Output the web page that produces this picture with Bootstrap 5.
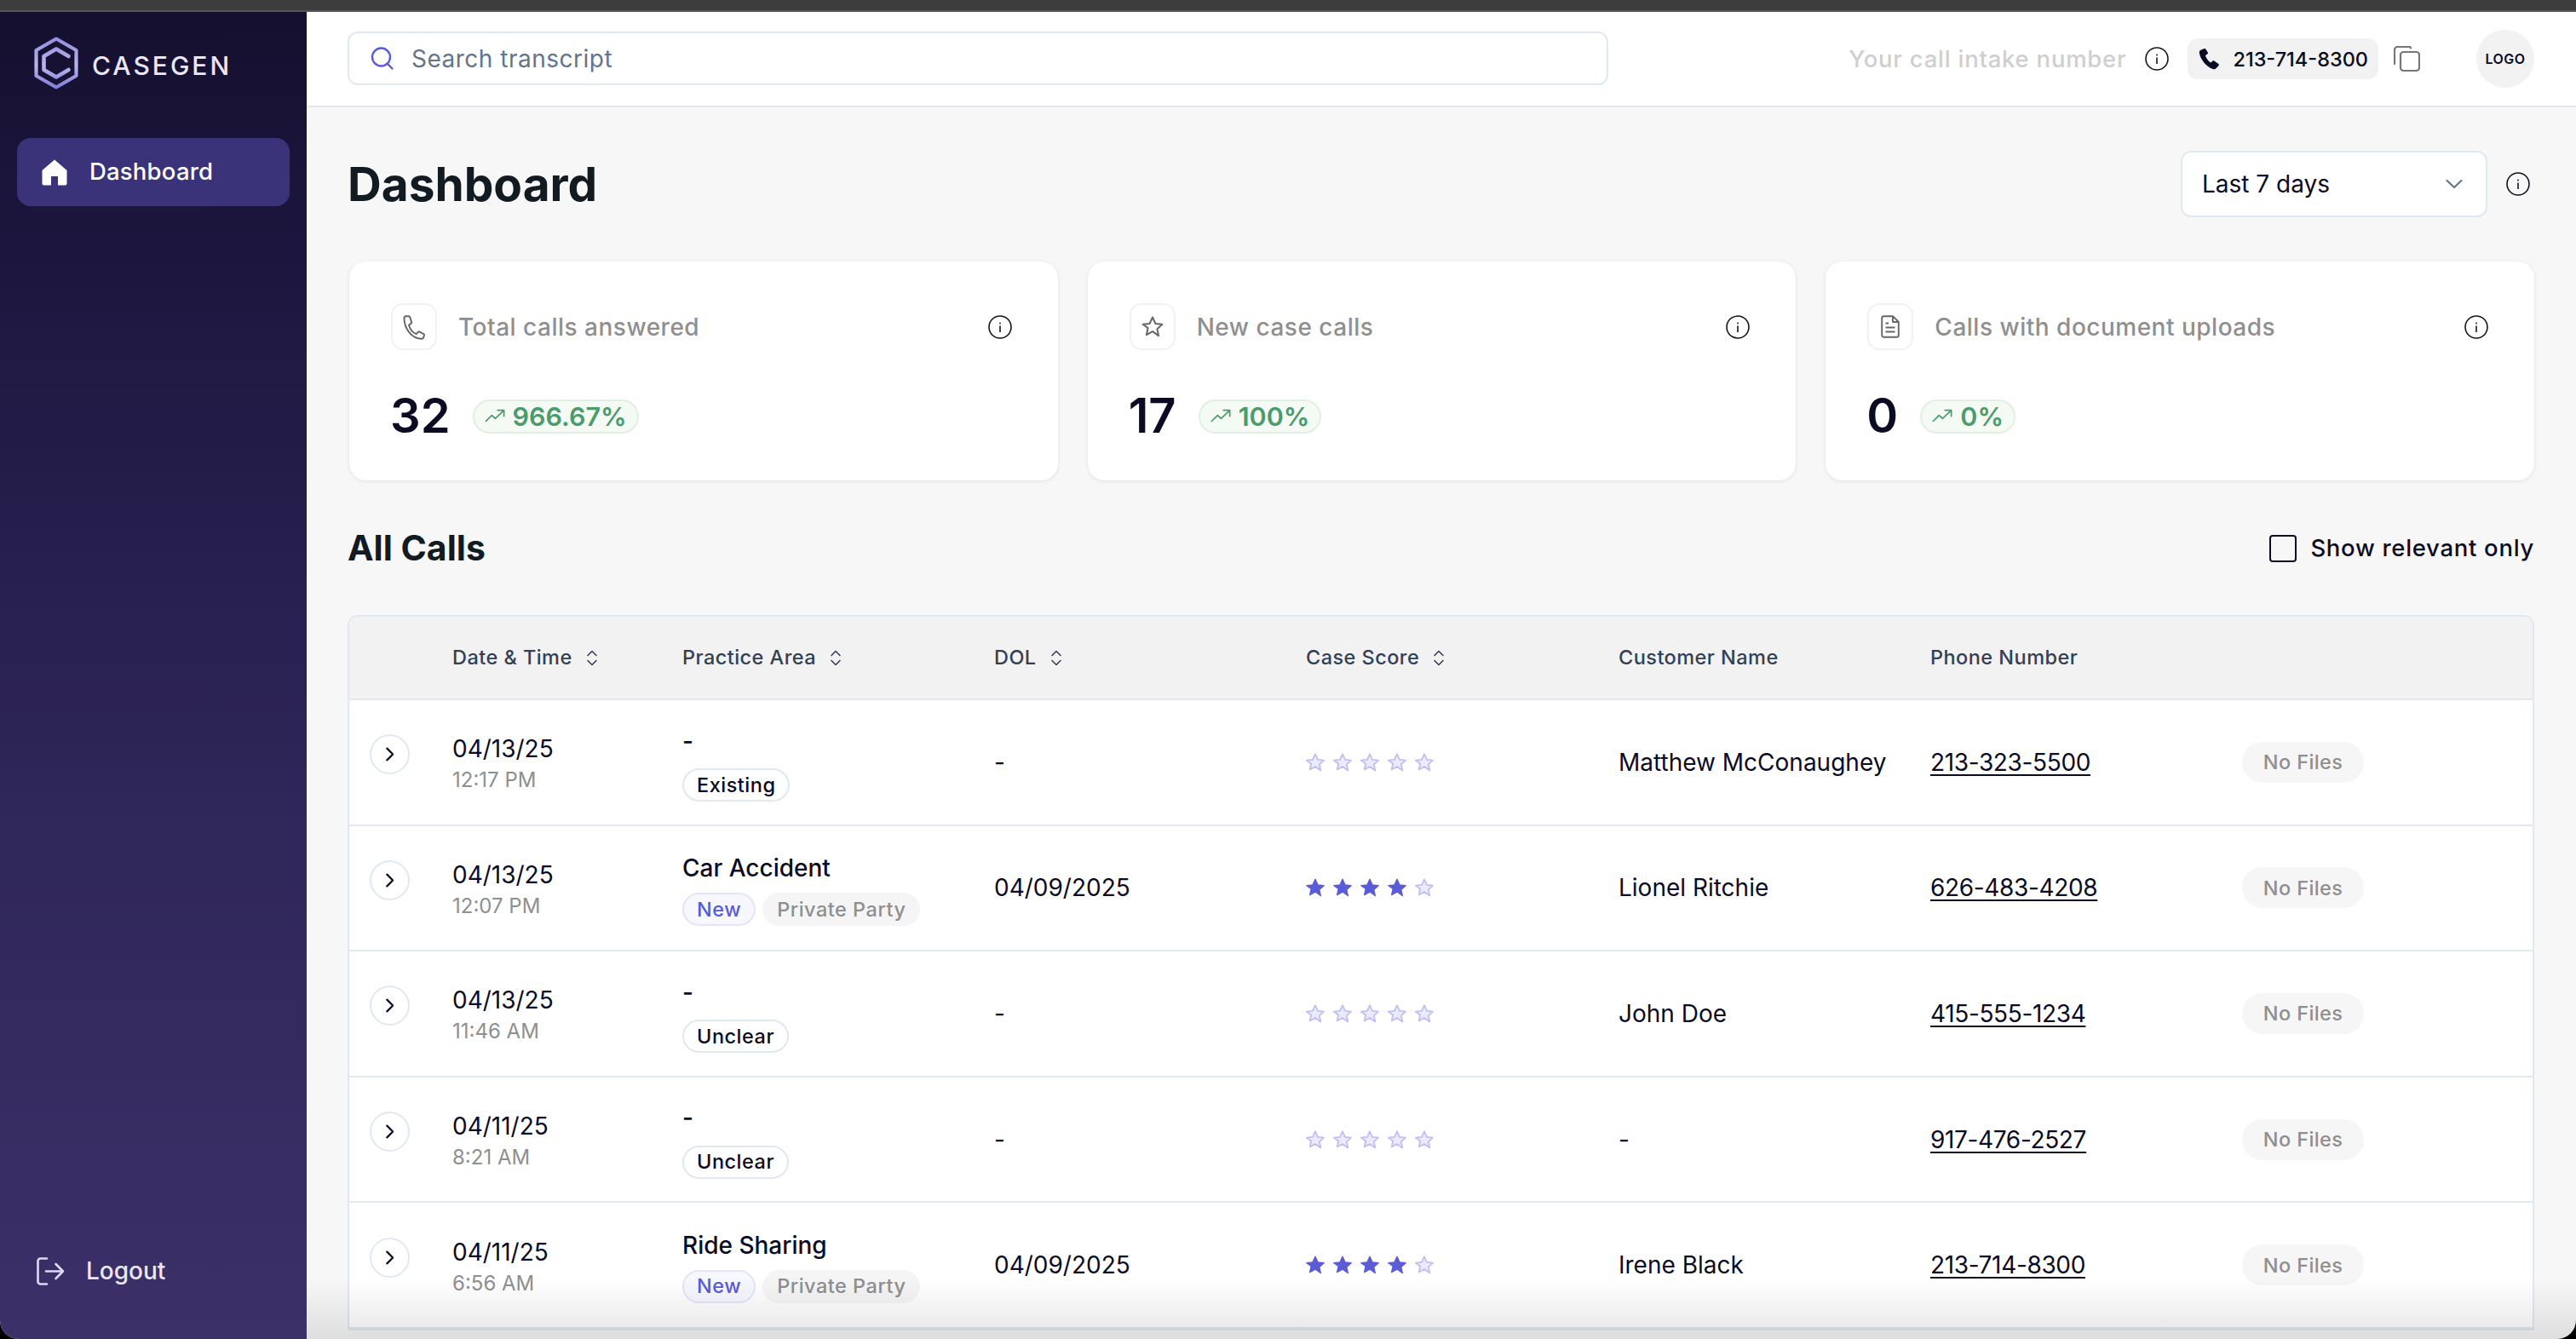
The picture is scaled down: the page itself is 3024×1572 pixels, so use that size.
<!DOCTYPE html>
<html lang="en">
<head>
<meta charset="utf-8">
<title>Casegen Dashboard</title>
<link rel="stylesheet" href="https://cdn.jsdelivr.net/npm/bootstrap@5.3.0/dist/css/bootstrap.min.css">
<style>
html,body{height:100%;margin:0;background:#000;overflow:hidden}
body{font-family:Inter,"Liberation Sans",sans-serif;color:#0b0b24;-webkit-font-smoothing:antialiased}
.cg-shell{height:1572px;width:3024px;overflow:hidden;border-radius:0 0 22px 22px;position:relative;background:#f7f7f7}
.cg-strip{height:14px;background:#3d3d3d;border-bottom:2px solid #565656;flex:none}
.cg-side{width:360px;flex:none;background:linear-gradient(180deg,#15102f 0%,#1d1740 20%,#2f2659 60%,#3c3069 100%)}
.cg-logo{padding:29px 0 0 40px;height:148px}
.cg-logorow{gap:16px;height:62px}
.cg-logorow span{font-size:30px;font-weight:500;letter-spacing:3px;color:#e9e7f5;margin-top:6px;line-height:1}
.cg-navitem{margin:0 20px;height:80px;border-radius:16px;background:#3b3379;color:#fff;padding-left:29px;gap:26px;font-size:27.5px;font-weight:500;letter-spacing:.2px;text-decoration:none}
.cg-logout{padding:0 0 59px 43px;gap:25px;color:#e9e7f5;font-size:28px;font-weight:500;text-decoration:none}
.cg-main{min-width:0}
.cg-head{height:112px;flex:none;background:#fff;border-bottom:2px solid #e2e8f0;padding:0 49px 0 48px}
.cg-search{width:1480px;height:63px;border:2px solid #e2e8f0;border-radius:12px;padding-left:25px;gap:21px;color:#64748b;font-size:28px;letter-spacing:.5px;background:#fff;margin-top:-2px}
.cg-search span,.cg-intake,.cg-phonepill span{padding-top:2px}
.cg-intake{color:#cfcfcf;font-size:27.5px;font-weight:500;letter-spacing:.75px;margin-right:22px}
.cg-phonepill{height:48px;border-radius:12px;background:#f2f2f2;padding:0 12px 0 13px;gap:15px;font-size:23.5px;font-weight:500;margin-left:22px}
.cg-copy{margin-left:18px}
.cg-avatar{width:68px;height:68px;border-radius:50%;background:#f2f2f2;margin-left:66px;font-size:16px;font-weight:600;letter-spacing:.4px}
.cg-page{padding:51px 49px 0 48px}
.cg-title{font-size:55px;font-weight:700;margin:0;color:#121a22}
.cg-range{width:360px;height:78px;border:2px solid #e2e8f0;border-radius:12px;background:#fff;padding:0 27px 0 23px;font-size:28px;color:#0b0b24}
.cg-range:hover{background:#fff;border-color:#e2e8f0}
.cg-rangeinfo{margin:0 5px 0 22px}
.cg-cards{margin-top:52px;gap:35px;margin-left:2px}
.cg-stat{flex:1 1 0;height:257px;border-radius:20px;border:0;background:#fff;box-shadow:0 1px 5px rgba(0,0,0,.09);padding:49px 54px 0 49px}
.cg-iconbox{width:54px;height:55px;border:2px solid #f2f2f2;border-radius:14px;flex:none}
.cg-statlabel{font-size:28px;font-weight:500;color:#8f8f8f;letter-spacing:.5px;margin-left:25px}
.cg-statnum{font-size:56px;line-height:41px;font-weight:600;color:#0b0b24;margin:0 26px 0 -1px}
.cg-trend{height:40px;border:2px solid #e1f1e1;background:#f5faf5;border-radius:20px;padding:0 12px;gap:9px;color:#4a9c6a;font-size:30.5px;font-weight:600}
.cg-statrow2{margin-top:57px}
.cg-subhead{margin-top:48px;height:64px;margin-bottom:46px}
.cg-subhead h2{font-size:41px;font-weight:700;margin:0;color:#121a22}
.cg-check{width:32px;height:32px;margin:0 16px 0 0;border:2px solid #0b0b24;border-radius:7px;background-color:transparent;float:none}
.cg-checklabel{font-size:27.5px;font-weight:500;letter-spacing:.7px}
.cg-tablewrap{border:2px solid #e2e8f0;border-radius:12px 12px 0 0;overflow:hidden;background:#fff}
.cg-table{table-layout:fixed;width:100%;margin:0;--bs-table-bg:transparent;border-color:#e2e8f0;color:#0b0b24}
.cg-table th{height:97px;background:#f2f2f2;border-bottom:2px solid #e2e8f0;padding:0;vertical-align:middle;font-size:23.5px;font-weight:500;letter-spacing:.45px;color:#344054}
.cg-table td{height:147.6px;border-bottom:2px solid #e2e8f0;padding:0;vertical-align:middle;font-size:28px;color:#0b0b24}
.cg-table td.cg-areacell{padding-top:3px}
.cg-sort{margin-left:16px;vertical-align:-2px}
.cg-expand{width:47px;height:47px;border:2px solid #e2e8f0;border-radius:50%;background:#fff;margin:0 0 18px 24px;padding:0}
.cg-time{font-size:24px;color:#8f8f8f;margin-top:2px;line-height:31px}
.cg-date{line-height:37px;margin-top:3px}
.cg-tag{height:39px;border-radius:20px;font-size:23.5px;font-weight:500;letter-spacing:.5px;padding:0 15px;border:2px solid transparent;display:inline-flex;align-items:center;line-height:1}
.cg-tag-plain{border-color:#e2e8f0;color:#0b0b24;background:#fff}
.cg-tag-new{border-color:#e4e4fb;color:#5b5bd6;background:#f7f7ff}
.cg-tag-grey{color:#8f8f8f;background:#f5f5f5}
.cg-area{line-height:36px;margin-bottom:11px;font-weight:500}
.cg-stars{gap:10px}
.cg-phone{color:#0b0b24;text-decoration:underline;text-underline-offset:4px;letter-spacing:-.35px}
.cg-files{width:143px;height:48px;border-radius:24px;background:#f6f6f6;color:#8f8f8f;font-size:23.5px;font-weight:500;letter-spacing:.4px}
.cg-fade{position:absolute;left:360px;right:0;bottom:0;height:72px;background:linear-gradient(180deg,rgba(0,0,0,0),rgba(0,0,0,.1));pointer-events:none}
</style>
</head>
<body>
<svg width="0" height="0" class="position-absolute">
<defs>
<linearGradient id="cgLogoGrad" gradientUnits="userSpaceOnUse" x1="0" y1="0" x2="0" y2="62"><stop offset="0" stop-color="#8f8cdc"/><stop offset=".55" stop-color="#b8b6ee"/><stop offset="1" stop-color="#7d7ad6"/></linearGradient>
<symbol id="i-info" viewBox="0 0 28 28"><circle cx="14" cy="14" r="13" fill="none" stroke="#15151f" stroke-width="1.6"/><rect x="13.2" y="12.5" width="1.6" height="7.5" fill="#15151f"/><rect x="13.2" y="8.6" width="1.6" height="1.8" fill="#15151f"/></symbol>
<symbol id="i-sort" viewBox="0 0 14 19"><path d="M2 6.5 7 1.5l5 5M2 12.5l5 5 5-5" fill="none" stroke="#344054" stroke-width="1.6" stroke-linecap="round" stroke-linejoin="round"/></symbol>
<symbol id="i-chev" viewBox="0 0 47 47"><path d="M20 16l7.5 7.5L20 31" fill="none" stroke="#0b0b24" stroke-width="2.4" stroke-linecap="round" stroke-linejoin="round"/></symbol>
<symbol id="i-star" viewBox="1 1.2 22 21.500"><path d="M12 2.200l3 6.600 7.100.8-5.300 4.800 1.500 7.100L12 17l-6.300 3.500 1.500-7.100L1.900 9.600 9 8.800z" fill="#5b5bd6" stroke="#5b5bd6" stroke-width="1.400" stroke-linejoin="round"/></symbol>
<symbol id="i-star0" viewBox="1 1.2 22 21.500"><path d="M12 2.200l3 6.600 7.100.8-5.300 4.800 1.500 7.100L12 17l-6.300 3.500 1.500-7.100L1.900 9.600 9 8.800z" fill="#ebebfd" stroke="#bfbff4" stroke-width="1.800" stroke-linejoin="round"/></symbol>
<symbol id="i-trend" viewBox="0 0 26 18"><path d="M1.500 15.500 9 8l4.500 4L24 2M16.500 1.500H24.500V9" fill="none" stroke="#4a9c6a" stroke-width="1.900" stroke-linecap="round" stroke-linejoin="round"/></symbol>
</defs>
</svg>

<div class="cg-shell d-flex flex-column">
  <div class="cg-strip"></div>
  <div class="d-flex flex-grow-1" style="min-height:0">
    <aside class="cg-side d-flex flex-column">
      <div class="cg-logo">
        <div class="cg-logorow d-flex align-items-center">
          <svg width="52" height="62" viewBox="0 0 52 62" aria-hidden="true">
            <path d="M26 2.500 49.500 16V46L26 59.500 2.500 46V16Z" fill="none" stroke="url(#cgLogoGrad)" stroke-width="4.200" stroke-linejoin="round"/>
            <path d="M40.500 23 26 14.500 11.500 23V39L26 47.500 40.500 39" fill="none" stroke="url(#cgLogoGrad)" stroke-width="4.600" stroke-linecap="round" stroke-linejoin="round"/>
          </svg>
          <span>CASEGEN</span>
        </div>
      </div>
      <a href="#" class="cg-navitem d-flex align-items-center">
        <svg width="30" height="31" viewBox="0 0 30 31" aria-hidden="true"><path d="M15 .5 29.500 13V28.500a2 2 0 0 1-2 2H19V20H11V30.500H2.500a2 2 0 0 1-2-2V13Z" fill="#fff"/></svg>
        <span>Dashboard</span>
      </a>
      <a href="#" class="cg-logout d-flex align-items-center mt-auto">
        <svg width="33" height="33" viewBox="0 0 33 33" aria-hidden="true"><path d="M12 1.500H4.500a3 3 0 0 0-3 3v24a3 3 0 0 0 3 3H12M11 16.500H31M22.500 8l8.500 8.500L22.500 25" fill="none" stroke="#dcdaf3" stroke-width="2.600" stroke-linecap="round" stroke-linejoin="round"/></svg>
        <span>Logout</span>
      </a>
    </aside>

    <main class="cg-main flex-grow-1 d-flex flex-column">
      <header class="cg-head d-flex align-items-center">
        <div class="cg-search d-flex align-items-center">
          <svg width="27" height="27" viewBox="0 0 27 27" aria-hidden="true"><circle cx="12.500" cy="12" r="10.500" fill="none" stroke="#5b5bd6" stroke-width="2.400"/><path d="M20 20l5.500 5.500" stroke="#5b5bd6" stroke-width="2.400" stroke-linecap="round"/></svg>
          <span>Search transcript</span>
        </div>
        <div class="d-flex align-items-center ms-auto">
          <span class="cg-intake">Your call intake number</span>
          <svg width="28" height="28" aria-hidden="true"><use href="#i-info"/></svg>
          <div class="cg-phonepill d-flex align-items-center">
            <svg width="25" height="26" viewBox="0 0 25 26" aria-hidden="true"><path d="M6.500 1 2 3C.8 3.700.6 5 1 7c1.500 7 8 15.500 15.500 18 1.800.5 3 .3 4-.7l3-3.300c.6-.7.5-1.500-.2-2l-5-3.500c-.6-.4-1.300-.4-1.800.1l-2 2c-2.500-1-6-5.600-6.500-8.600l2.300-1.500c.6-.4.800-1 .6-1.700L8.400 1.700C8.100 1 7.300.7 6.500 1Z" fill="#0b0b24"/></svg>
            <span>213-714-8300</span>
          </div>
          <svg class="cg-copy" width="31" height="30" viewBox="0 0 31 30" aria-hidden="true"><path d="M20 2.500C20 1.700 19.300 1 18.500 1H4.500A3.500 3.500 0 0 0 1 4.500V21" fill="none" stroke="#777" stroke-width="2.200" stroke-linecap="round"/><rect x="8" y="7" width="22" height="22" rx="3.500" fill="none" stroke="#777" stroke-width="2.200"/></svg>
          <div class="cg-avatar d-flex align-items-center justify-content-center"><span>LOGO</span></div>
        </div>
      </header>

      <div class="cg-page">
        <div class="d-flex align-items-center">
          <h1 class="cg-title">Dashboard</h1>
          <button type="button" class="btn cg-range d-flex align-items-center justify-content-between ms-auto">
            <span>Last 7 days</span>
            <svg width="20" height="10" viewBox="0 0 20 10" aria-hidden="true"><path d="M1.500 1 10 9l8.500-8" fill="none" stroke="#64748b" stroke-width="2.200" stroke-linecap="round" stroke-linejoin="round"/></svg>
          </button>
          <svg class="cg-rangeinfo" width="28" height="28" aria-hidden="true"><use href="#i-info"/></svg>
        </div>

        <div class="cg-cards d-flex">
          <div class="card cg-stat">
            <div class="d-flex align-items-center">
              <div class="cg-iconbox d-flex align-items-center justify-content-center"><svg width="28" height="30" viewBox="0 0 24 26" aria-hidden="true"><path d="M3.500 2h3.200c.6 0 1 .3 1.200.9l1.600 5c.2.500 0 1-.4 1.300L6.800 11c1.200 4 3.800 7.500 7.500 9l2-2c.5-.4 1-.5 1.500-.2l4 2.200c.5.300.8.800.6 1.400l-.9 2.500c-.2.700-.8 1.100-1.500 1.100C9.500 25 2 14.500 2 3.500 2 2.700 2.700 2 3.500 2Z" fill="none" stroke="#666" stroke-width="1.700" stroke-linejoin="round"/></svg></div>
              <span class="cg-statlabel">Total calls answered</span>
              <svg class="ms-auto" width="28" height="28" aria-hidden="true"><use href="#i-info"/></svg>
            </div>
            <div class="cg-statrow2 d-flex align-items-center">
              <span class="cg-statnum">32</span>
              <span class="cg-trend d-flex align-items-center"><svg width="24" height="17" aria-hidden="true"><use href="#i-trend"/></svg><span>966.67%</span></span>
            </div>
          </div>
          <div class="card cg-stat">
            <div class="d-flex align-items-center">
              <div class="cg-iconbox d-flex align-items-center justify-content-center"><svg width="28" height="27" viewBox="0 0 24 24" aria-hidden="true"><path d="M12 2.200l3 6.600 7.100.8-5.300 4.800 1.500 7.100L12 17l-6.300 3.500 1.500-7.100L1.900 9.600 9 8.800z" fill="none" stroke="#666" stroke-width="1.800" stroke-linejoin="round"/></svg></div>
              <span class="cg-statlabel">New case calls</span>
              <svg class="ms-auto" width="28" height="28" aria-hidden="true"><use href="#i-info"/></svg>
            </div>
            <div class="cg-statrow2 d-flex align-items-center">
              <span class="cg-statnum">17</span>
              <span class="cg-trend d-flex align-items-center"><svg width="24" height="17" aria-hidden="true"><use href="#i-trend"/></svg><span>100%</span></span>
            </div>
          </div>
          <div class="card cg-stat">
            <div class="d-flex align-items-center">
              <div class="cg-iconbox d-flex align-items-center justify-content-center"><svg width="22" height="27" viewBox="0 0 22 27" aria-hidden="true"><path d="M14 1.200H3.500a2.300 2.300 0 0 0-2.300 2.300v20a2.300 2.300 0 0 0 2.300 2.300h15a2.300 2.300 0 0 0 2.300-2.300V8Zm0 0V8h6.800M5.500 9.500H9M5.500 14.500h11M5.500 19.500h11" fill="none" stroke="#666" stroke-width="1.900" stroke-linejoin="round"/></svg></div>
              <span class="cg-statlabel">Calls with document uploads</span>
              <svg class="ms-auto" width="28" height="28" aria-hidden="true"><use href="#i-info"/></svg>
            </div>
            <div class="cg-statrow2 d-flex align-items-center">
              <span class="cg-statnum">0</span>
              <span class="cg-trend d-flex align-items-center"><svg width="24" height="17" aria-hidden="true"><use href="#i-trend"/></svg><span>0%</span></span>
            </div>
          </div>
        </div>

        <div class="cg-subhead d-flex align-items-center justify-content-between">
          <h2>All Calls</h2>
          <label class="d-flex align-items-center m-0">
            <input class="form-check-input cg-check" type="checkbox">
            <span class="cg-checklabel">Show relevant only</span>
          </label>
        </div>

        <div class="cg-tablewrap">
          <table class="table cg-table">
            <colgroup><col style="width:121px"><col style="width:270px"><col style="width:366px"><col style="width:366px"><col style="width:367px"><col style="width:366px"><col style="width:366px"><col></colgroup>
            <thead>
              <tr>
                <th></th>
                <th>Date &amp; Time<svg class="cg-sort" width="14" height="19"><use href="#i-sort"/></svg></th>
                <th>Practice Area<svg class="cg-sort" width="14" height="19"><use href="#i-sort"/></svg></th>
                <th>DOL<svg class="cg-sort" width="14" height="19"><use href="#i-sort"/></svg></th>
                <th>Case Score<svg class="cg-sort" width="14" height="19"><use href="#i-sort"/></svg></th>
                <th>Customer Name</th>
                <th>Phone Number</th>
                <th></th>
              </tr>
            </thead>
            <tbody>
              <tr>
                <td><button type="button" class="cg-expand d-block"><svg class="d-block" width="43" height="43" viewBox="0 0 47 47"><use href="#i-chev"/></svg></button></td>
                <td><div class="cg-date">04/13/25</div><div class="cg-time">12:17 PM</div></td>
                <td class="cg-areacell"><div class="cg-area">-</div><span class="cg-tag cg-tag-plain">Existing</span></td>
                <td>-</td>
                <td><div class="cg-stars d-flex"><svg width="22" height="22"><use href="#i-star0"/></svg><svg width="22" height="22"><use href="#i-star0"/></svg><svg width="22" height="22"><use href="#i-star0"/></svg><svg width="22" height="22"><use href="#i-star0"/></svg><svg width="22" height="22"><use href="#i-star0"/></svg></div></td>
                <td>Matthew McConaughey</td>
                <td><a href="#" class="cg-phone">213-323-5500</a></td>
                <td><span class="cg-files d-flex align-items-center justify-content-center">No Files</span></td>
              </tr>
              <tr>
                <td><button type="button" class="cg-expand d-block"><svg class="d-block" width="43" height="43" viewBox="0 0 47 47"><use href="#i-chev"/></svg></button></td>
                <td><div class="cg-date">04/13/25</div><div class="cg-time">12:07 PM</div></td>
                <td class="cg-areacell"><div class="cg-area">Car Accident</div><div class="d-flex gap-2"><span class="cg-tag cg-tag-new">New</span><span class="cg-tag cg-tag-grey">Private Party</span></div></td>
                <td>04/09/2025</td>
                <td><div class="cg-stars d-flex"><svg width="22" height="22"><use href="#i-star"/></svg><svg width="22" height="22"><use href="#i-star"/></svg><svg width="22" height="22"><use href="#i-star"/></svg><svg width="22" height="22"><use href="#i-star"/></svg><svg width="22" height="22"><use href="#i-star0"/></svg></div></td>
                <td>Lionel Ritchie</td>
                <td><a href="#" class="cg-phone">626-483-4208</a></td>
                <td><span class="cg-files d-flex align-items-center justify-content-center">No Files</span></td>
              </tr>
              <tr>
                <td><button type="button" class="cg-expand d-block"><svg class="d-block" width="43" height="43" viewBox="0 0 47 47"><use href="#i-chev"/></svg></button></td>
                <td><div class="cg-date">04/13/25</div><div class="cg-time">11:46 AM</div></td>
                <td class="cg-areacell"><div class="cg-area">-</div><span class="cg-tag cg-tag-plain">Unclear</span></td>
                <td>-</td>
                <td><div class="cg-stars d-flex"><svg width="22" height="22"><use href="#i-star0"/></svg><svg width="22" height="22"><use href="#i-star0"/></svg><svg width="22" height="22"><use href="#i-star0"/></svg><svg width="22" height="22"><use href="#i-star0"/></svg><svg width="22" height="22"><use href="#i-star0"/></svg></div></td>
                <td>John Doe</td>
                <td><a href="#" class="cg-phone">415-555-1234</a></td>
                <td><span class="cg-files d-flex align-items-center justify-content-center">No Files</span></td>
              </tr>
              <tr>
                <td><button type="button" class="cg-expand d-block"><svg class="d-block" width="43" height="43" viewBox="0 0 47 47"><use href="#i-chev"/></svg></button></td>
                <td><div class="cg-date">04/11/25</div><div class="cg-time">8:21 AM</div></td>
                <td class="cg-areacell"><div class="cg-area">-</div><span class="cg-tag cg-tag-plain">Unclear</span></td>
                <td>-</td>
                <td><div class="cg-stars d-flex"><svg width="22" height="22"><use href="#i-star0"/></svg><svg width="22" height="22"><use href="#i-star0"/></svg><svg width="22" height="22"><use href="#i-star0"/></svg><svg width="22" height="22"><use href="#i-star0"/></svg><svg width="22" height="22"><use href="#i-star0"/></svg></div></td>
                <td>-</td>
                <td><a href="#" class="cg-phone">917-476-2527</a></td>
                <td><span class="cg-files d-flex align-items-center justify-content-center">No Files</span></td>
              </tr>
              <tr>
                <td><button type="button" class="cg-expand d-block"><svg class="d-block" width="43" height="43" viewBox="0 0 47 47"><use href="#i-chev"/></svg></button></td>
                <td><div class="cg-date">04/11/25</div><div class="cg-time">6:56 AM</div></td>
                <td class="cg-areacell"><div class="cg-area">Ride Sharing</div><div class="d-flex gap-2"><span class="cg-tag cg-tag-new">New</span><span class="cg-tag cg-tag-grey">Private Party</span></div></td>
                <td>04/09/2025</td>
                <td><div class="cg-stars d-flex"><svg width="22" height="22"><use href="#i-star"/></svg><svg width="22" height="22"><use href="#i-star"/></svg><svg width="22" height="22"><use href="#i-star"/></svg><svg width="22" height="22"><use href="#i-star"/></svg><svg width="22" height="22"><use href="#i-star0"/></svg></div></td>
                <td>Irene Black</td>
                <td><a href="#" class="cg-phone">213-714-8300</a></td>
                <td><span class="cg-files d-flex align-items-center justify-content-center">No Files</span></td>
              </tr>
            </tbody>
          </table>
        </div>
      </div>
    </main>
  </div>
  <div class="cg-fade"></div>
</div>
<script src="https://cdn.jsdelivr.net/npm/bootstrap@5.3.0/dist/js/bootstrap.bundle.min.js"></script>
</body>
</html>
